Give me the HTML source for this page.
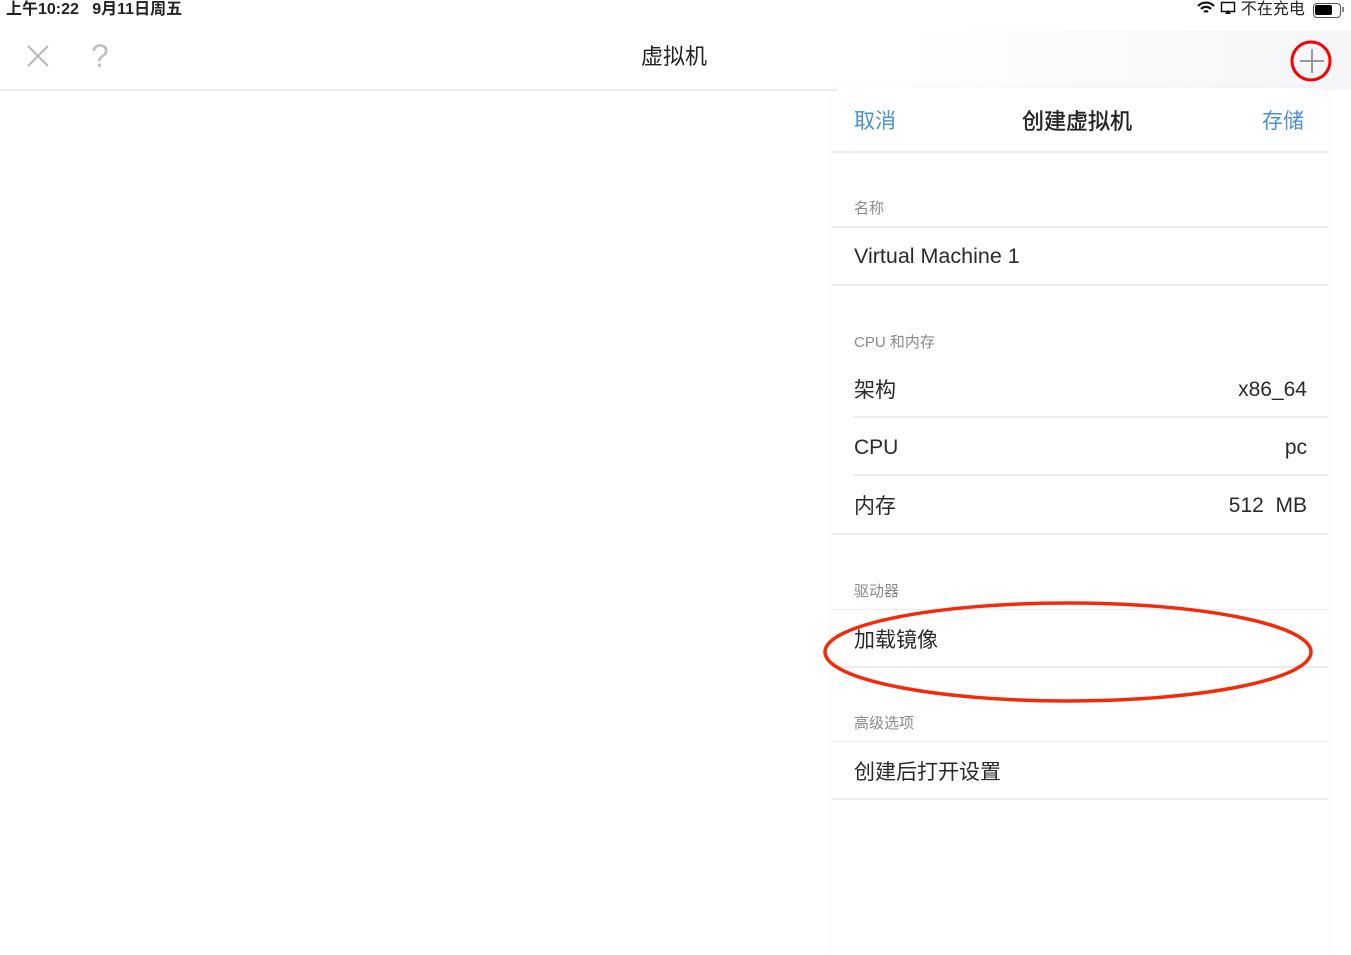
<!DOCTYPE html>
<html><head><meta charset="utf-8"><style>
*{margin:0;padding:0;box-sizing:border-box}
body{width:1351px;height:955px;background:#fff;position:relative;overflow:hidden;font-family:"Liberation Sans","Noto Sans CJK SC",sans-serif;color:#222}
.a{position:absolute;white-space:nowrap;line-height:24px}
.hl{position:absolute;height:2px;background:#ececee}
.sec{font-size:15px;color:#8a8a8e}
.row{font-size:21px;color:#2a2a2a}
.val{font-size:21px;color:#2a2a2a;text-align:right;right:44px}
.blue{color:#4a90d0;font-size:21px}
</style></head><body>
<div class="a" style="left:6px;top:-2px;font-size:16px;font-weight:bold;color:#222">上午10:22&nbsp;&nbsp;&nbsp;9月11日周五</div>
<div class="a" style="left:1196px;top:-2px;font-size:16px;color:#222">
<svg width="20" height="14" viewBox="0 0 20 14" style="vertical-align:-1px"><path d="M2 5a11 11 0 0 1 16 0M5 8a7 7 0 0 1 10 0M8 11a3 3 0 0 1 4 0" stroke="#111" stroke-width="2.2" fill="none"/></svg>
<svg width="16" height="14" viewBox="0 0 16 14" style="vertical-align:-1px"><rect x="1.5" y="1.5" width="13" height="9" fill="none" stroke="#111" stroke-width="1.5"/><path d="M5 13h6l-3-4z" fill="#111"/></svg>
不在充电</div>
<div class="a" style="left:1313px;top:3px;width:28px;height:15px;border:1.5px solid #555;border-radius:4px"><div style="position:absolute;left:1px;top:1px;width:17px;height:10px;background:#000;border-radius:2px"></div></div>
<div class="a" style="left:1342px;top:7px;width:2px;height:5px;background:#888"></div>
<svg class="a" style="left:26px;top:44px" width="24" height="24"><path d="M2 2L22 22M22 2L2 22" stroke="#b8b8b8" stroke-width="2"/></svg>
<div class="a" style="left:91px;top:40px;font-size:32px;color:#c0c0c0;line-height:32px">?</div>
<div class="a" style="left:641px;top:45px;font-size:22px;color:#222">虚拟机</div>
<div class="hl" style="left:0;top:89px;width:840px;background:#eeeef0"></div>
<div class="a" style="left:900px;top:30px;width:451px;height:60px;background:linear-gradient(90deg,#fff,#f6f5f8)"></div>
<svg class="a" style="left:1289px;top:39px" width="44" height="44"><path d="M23 10V34M11 22H35" stroke="#999" stroke-width="2"/><circle cx="22" cy="22" r="19" stroke="#f00" stroke-width="3" fill="none"/></svg>
<div class="a" style="left:832px;top:88px;width:496px;height:867px;background:#fff;border-radius:12px 12px 0 0;box-shadow:0 0 12px rgba(0,0,0,0.04)"></div>
<div class="a blue" style="left:854px;top:110px">取消</div>
<div class="a" style="left:1022px;top:110px;font-size:22px;color:#222;-webkit-text-stroke:0.4px #222">创建虚拟机</div>
<div class="a blue" style="left:1262px;top:110px">存储</div>
<div class="hl" style="left:832px;top:151px;width:496px"></div>
<div class="a sec" style="left:854px;top:197px">名称</div>
<div class="hl" style="left:832px;top:226px;width:496px"></div>
<div class="a row" style="left:854px;top:244px;font-size:21.5px">Virtual Machine 1</div>
<div class="hl" style="left:832px;top:284px;width:496px"></div>
<div class="a sec" style="left:854px;top:331px">CPU 和内存</div>
<div class="a row" style="left:854px;top:379px">架构</div><div class="a val" style="top:378px">x86_64</div>
<div class="hl" style="left:853px;top:416px;width:475px"></div>
<div class="a row" style="left:854px;top:436px">CPU</div><div class="a val" style="top:436px">pc</div>
<div class="hl" style="left:853px;top:474px;width:475px"></div>
<div class="a row" style="left:854px;top:495px">内存</div><div class="a val" style="top:494px">512&nbsp; MB</div>
<div class="hl" style="left:832px;top:533px;width:496px"></div>
<div class="a sec" style="left:854px;top:580px">驱动器</div>
<div class="hl" style="left:832px;top:609px;width:496px;height:1px"></div>
<div class="a row" style="left:854px;top:629px">加载镜像</div>
<div class="hl" style="left:832px;top:666px;width:496px"></div>
<div class="a sec" style="left:854px;top:712px">高级选项</div>
<div class="hl" style="left:832px;top:741px;width:496px;height:1px"></div>
<div class="a row" style="left:854px;top:761px">创建后打开设置</div>
<div class="hl" style="left:832px;top:798px;width:496px"></div>
<svg class="a" style="left:820px;top:598px" width="500" height="110"><ellipse cx="248" cy="54" rx="243" ry="49" stroke="#f52a0a" stroke-width="3.5" fill="none"/></svg>
</body></html>
